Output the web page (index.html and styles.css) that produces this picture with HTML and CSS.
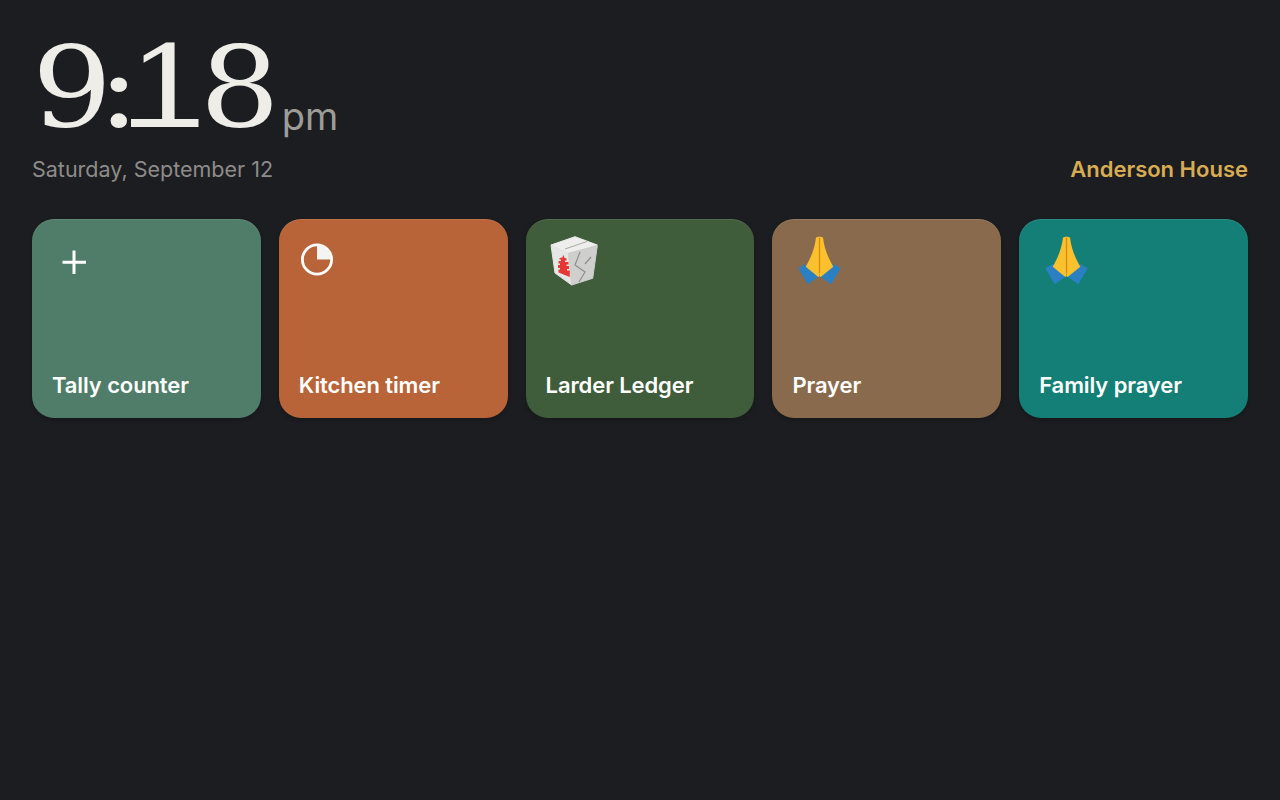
FILE: index.html
```html
<!DOCTYPE html>
<html lang="en">

<head>
    <meta charset="UTF-8">
    <meta name="viewport" content="width=device-width, initial-scale=1.0">
    <title>Anderson House</title>
    <link rel="stylesheet" href="styles.css">
</head>

<body>
    <header class="top">
        <div class="clock">
            <span class="time"><span class="tight">9</span><span class="colon">:</span><span class="one">1</span><span>8</span></span>
            <span class="ampm">pm</span>
        </div>
        <div class="date-row">
            <span class="date">Saturday, September 12</span>
            <span class="house">Anderson House</span>
        </div>
    </header>

    <main class="cards">
        <a class="card tally">
            <svg class="icon" viewBox="0 0 54 54">
                <path d="M22 17.500V41M10.500 29.300H34" fill="none" stroke="#fff" stroke-width="3" />
            </svg>
            <span class="label">Tally counter</span>
        </a>
        <a class="card timer">
            <svg class="icon" viewBox="0 0 54 54">
                <circle cx="18" cy="26.500" r="14.600" fill="none" stroke="#fff" stroke-width="2.800" />
                <path d="M18 26.500V11.900A14.600 14.600 0 0 1 32.600 26.500Z" fill="#f4f4f2" />
            </svg>
            <span class="label">Kitchen timer</span>
        </a>
        <a class="card larder">
            <svg class="icon" viewBox="0 0 54 54">
                <!-- takeout box -->
                <path d="M5 12L29 3.700 51.300 12 22.300 20.300Z" fill="#eeeeec" stroke="#eeeeec" stroke-linejoin="round" />
                <path d="M5 12L22.300 20.300 25.700 52 9 40Z" fill="#e6e6e4" stroke="#e6e6e4" stroke-linejoin="round" />
                <path d="M22.300 20.300L51.300 12.700 46.700 45.300 25.700 52Z" fill="#cfcfcd" stroke="#cfcfcd" stroke-linejoin="round" />
                <path d="M19 16L41 8.500" fill="none" stroke="#a8a8a6" stroke-width="1" />
                <path d="M34 19L29 32 39 39 33 49M45 24L39 31" fill="none" stroke="#8f8f8d" stroke-width="1.200" />
                <path d="M17 22.500H18V24.500L20.500 25.500V27.500L19 27.500V29H22.500V31.500H20.500V33H23V36H21V37.500H23.800V44L12.500 39.500V36.500H14V35H12V32H14V30.500H12.500V28H15V26.500H13.500V25L16.500 24.500Z" fill="#e53935" />
            </svg>
            <span class="label">Larder Ledger</span>
        </a>
        <a class="card prayer">
            <svg class="icon" viewBox="0 0 54 54">
                <use href="#hands" />
            </svg>
            <span class="label">Prayer</span>
        </a>
        <a class="card family">
            <svg class="icon" viewBox="0 0 54 54">
                <defs>
                    <g id="hands">
                        <path d="M6.300 35.300L13.700 31 26.300 44 15.700 51.300Z" fill="#2b7fc3" />
                        <path d="M48.700 35.300L41.300 31 28.700 44 39.300 51.300Z" fill="#2b7fc3" />
                        <path d="M24 4.500L27.500 3.500V43L26.300 44 13.700 33.700C18 26 22.500 17 24 4.500Z" fill="#fbc02d" />
                        <path d="M31 4.500L27.500 3.500V43L28.700 44 41.300 33.700C37 26 32.500 17 31 4.500Z" fill="#fbc02d" />
                        <path d="M27.500 5V40" fill="none" stroke="#d98e0a" stroke-width="1.400" />
                    </g>
                </defs>
                <use href="#hands" />
            </svg>
            <span class="label">Family prayer</span>
        </a>
    </main>
</body>

</html>
```

FILE: styles.css
```css
body {
    margin: 0;
    padding: 0;
    height: 800px;
    overflow: hidden;
    background-color: #1c1d21;
    font-family: "Inter", "Liberation Sans", sans-serif;
}

.top {
    padding: 24px 32px 0;
}

.clock {
    display: flex;
    align-items: flex-end;
    height: 122px;
}

.time {
    display: inline-block;
    font-family: "DejaVu Serif", serif;
    font-size: 112px;
    line-height: 118px;
    letter-spacing: -5.600px;
    color: #eeede8;
    transform: scaleX(1.125);
    transform-origin: left;
}

.tight {
    letter-spacing: -13px;
}

.colon {
    letter-spacing: -10.500px;
}

.one {
    position: relative;
    letter-spacing: -7.600px;
}

/* wide foot of the 1 */
.one::after {
    content: "";
    position: absolute;
    left: 2px;
    right: 1px;
    bottom: 25px;
    height: 8px;
    background-color: #eeede8;
}

.ampm {
    margin: 0 0 11px 35px;
    font-size: 38px;
    line-height: 38px;
    color: #9d9c97;
}

.date-row {
    display: flex;
    justify-content: space-between;
    align-items: baseline;
    margin-top: 10px;
}

.date {
    font-size: 21.500px;
    color: #8d8c88;
}

.house {
    font-size: 22px;
    font-weight: 600;
    color: #d8ac52;
}

.cards {
    display: grid;
    grid-template-columns: repeat(5, 1fr);
    gap: 18px;
    margin: 37px 32px 0;
}

.card {
    display: flex;
    flex-direction: column;
    justify-content: space-between;
    box-sizing: border-box;
    height: 199px;
    padding: 14px 20px 19px;
    border-radius: 22px;
    box-shadow: inset 0 1px 0 rgba(255, 255, 255, 0.1), 0 2px 4px rgba(0, 0, 0, 0.2);
    color: #fff;
}

.icon {
    display: block;
    width: 54px;
    height: 54px;
}

.label {
    font-size: 22px;
    font-weight: 600;
    line-height: 28px;
    letter-spacing: -0.1px;
}

.tally {
    background-color: #4f7d69;
}

.timer {
    background-color: #b86338;
}

.larder {
    background-color: #3f5c3b;
}

.prayer {
    background-color: #8a6a4c;
}

.family {
    background-color: #147f76;
}
```
